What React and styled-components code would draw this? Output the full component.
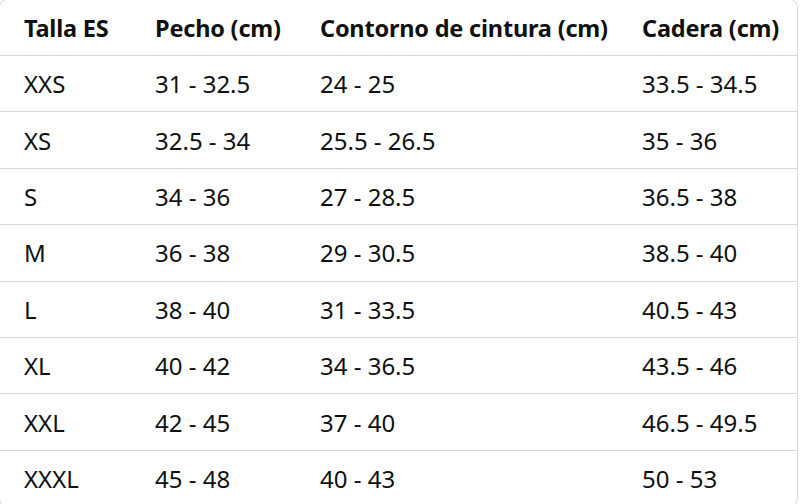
import React from "react";
import styled, { createGlobalStyle } from "styled-components";

const GlobalStyle = createGlobalStyle`
  html, body {
    margin: 0;
    padding: 0;
    background: #ffffff;
  }
  body {
    font-family: "Noto Sans", "Open Sans", Arial, sans-serif;
    color: #0f1111;
    overflow: hidden;
  }
`;

const columns = ["Talla ES", "Pecho (cm)", "Contorno de cintura (cm)", "Cadera (cm)"];

const rows = [
  ["XXS", "31 - 32.5", "24 - 25", "33.5 - 34.5"],
  ["XS", "32.5 - 34", "25.5 - 26.5", "35 - 36"],
  ["S", "34 - 36", "27 - 28.5", "36.5 - 38"],
  ["M", "36 - 38", "29 - 30.5", "38.5 - 40"],
  ["L", "38 - 40", "31 - 33.5", "40.5 - 43"],
  ["XL", "40 - 42", "34 - 36.5", "43.5 - 46"],
  ["XXL", "42 - 45", "37 - 40", "46.5 - 49.5"],
  ["XXXL", "45 - 48", "40 - 43", "50 - 53"],
];

const Card = styled.div`
  width: 797px;
  margin: -1px 0 0 -1px;
  border: 1px solid #d5d9d9;
  border-radius: 8px;
  overflow: hidden;
  background: #fff;
`;

const Row = styled.div`
  display: grid;
  grid-template-columns: 131px 165px 322px 1fr;
  height: ${(p) => (p.$head ? "55px" : "56.4px")};
  border-top: ${(p) => (p.$head ? "none" : "1.4px solid #d5d9d9")};
  box-sizing: border-box;
`;

const Cell = styled.div`
  display: flex;
  align-items: center;
  padding-left: 24px;
  font-size: ${(p) => (p.$head ? "23.5px" : "24px")};
  font-weight: ${(p) => (p.$head ? 700 : 400)};
  white-space: nowrap;
  letter-spacing: ${(p) => (p.$head ? "-0.2px" : "0")};
`;

export default function App() {
  return (
    <>
      <GlobalStyle />
      <Card>
        <Row $head>
          {columns.map((c) => (
            <Cell $head key={c}>
              {c}
            </Cell>
          ))}
        </Row>
        {rows.map((r) => (
          <Row key={r[0]}>
            {r.map((v, i) => (
              <Cell key={i}>{v}</Cell>
            ))}
          </Row>
        ))}
      </Card>
    </>
  );
}
